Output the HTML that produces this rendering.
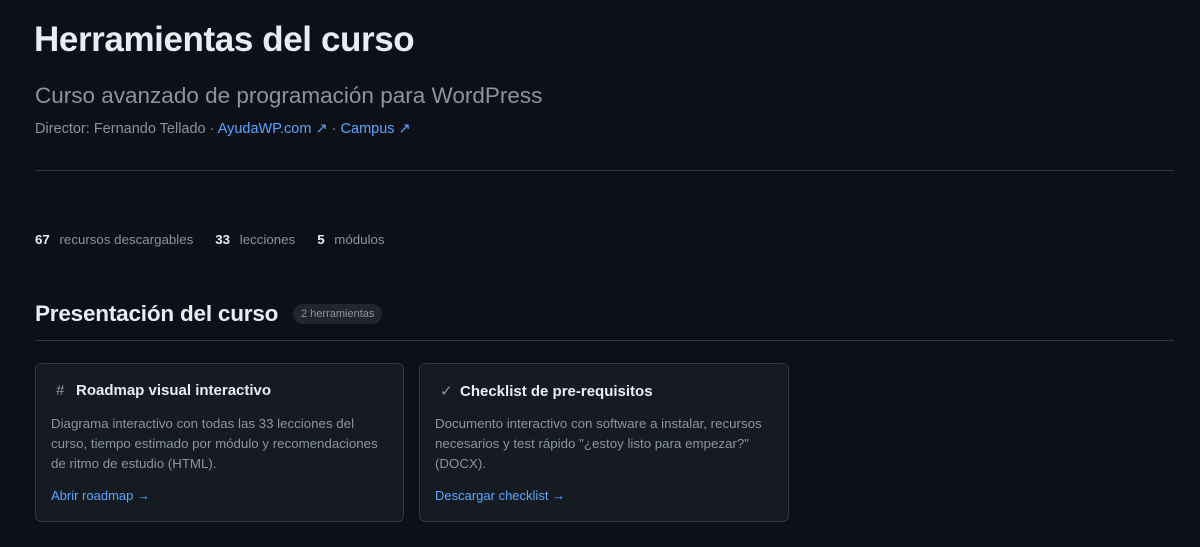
<!DOCTYPE html><html><head><style>
body{margin:0;background:#0d1117;font-family:"Liberation Sans",sans-serif;color:#e6edf3;width:1200px;height:547px;overflow:hidden}
h1{position:absolute;top:20px;left:34px;margin:0;font-size:35px;font-weight:700;color:#e6edf3;letter-spacing:-0.4px}
.sub{position:absolute;top:83px;left:35px;font-size:22.5px;color:#8b949e}
.dir{position:absolute;top:121px;left:35px;font-size:14.5px;color:#8b949e}
a{color:#58a6ff;text-decoration:none}
.hr{position:absolute;left:35px;width:1139px;height:1px;background:#30363d}
.st{position:absolute;top:232px;left:35px;font-size:13.3px;color:#8b949e}
.st b{color:#e6edf3;margin-right:6px}.st span{margin-right:22px}
h2{position:absolute;top:301px;left:35px;margin:0;font-size:22.5px;font-weight:700;color:#e6edf3;letter-spacing:-0.2px}
.pill{position:absolute;top:304px;left:293px;height:20px;line-height:20px;padding:0 8px;border-radius:10px;background:#21262d;color:#8b949e;font-size:11px}
.card{position:absolute;top:363px;width:369px;height:159px;background:#161b22;border:1px solid #30363d;border-radius:6px;box-sizing:border-box}
.t{position:absolute;top:18px;left:15px;font-size:15px;font-weight:700;color:#e6edf3}
.t i{font-style:normal;color:#8b949e;font-weight:400;margin:0 12px 0 5px;display:inline-block;width:8px;text-align:center}
.d{position:absolute;top:50px;left:15px;right:18px;font-size:13.3px;line-height:20px;color:#8b949e}
.l{position:absolute;top:124px;left:15px;font-size:13px}
</style></head><body>
<h1>Herramientas del curso</h1>
<div class="sub">Curso avanzado de programación para WordPress</div>
<div class="dir">Director: Fernando Tellado · <a>AyudaWP.com ↗</a> · <a>Campus ↗</a></div>
<div class="hr" style="top:170px"></div>
<div class="st"><span><b>67</b> recursos descargables</span><span><b>33</b> lecciones</span><span><b>5</b> módulos</span></div>
<h2>Presentación del curso</h2>
<div class="pill">2 herramientas</div>
<div class="hr" style="top:340px"></div>
<div class="card" style="left:35px"><div class="t"><i>#</i>Roadmap visual interactivo</div><div class="d">Diagrama interactivo con todas las 33 lecciones del curso, tiempo estimado por módulo y recomendaciones de ritmo de estudio (HTML).</div><div class="l"><a>Abrir roadmap →</a></div></div>
<div class="card" style="left:419px;width:370px"><div class="t"><i>✓</i>Checklist de pre-requisitos</div><div class="d">Documento interactivo con software a instalar, recursos necesarios y test rápido "¿estoy listo para empezar?" (DOCX).</div><div class="l"><a>Descargar checklist →</a></div></div>
</body></html>
